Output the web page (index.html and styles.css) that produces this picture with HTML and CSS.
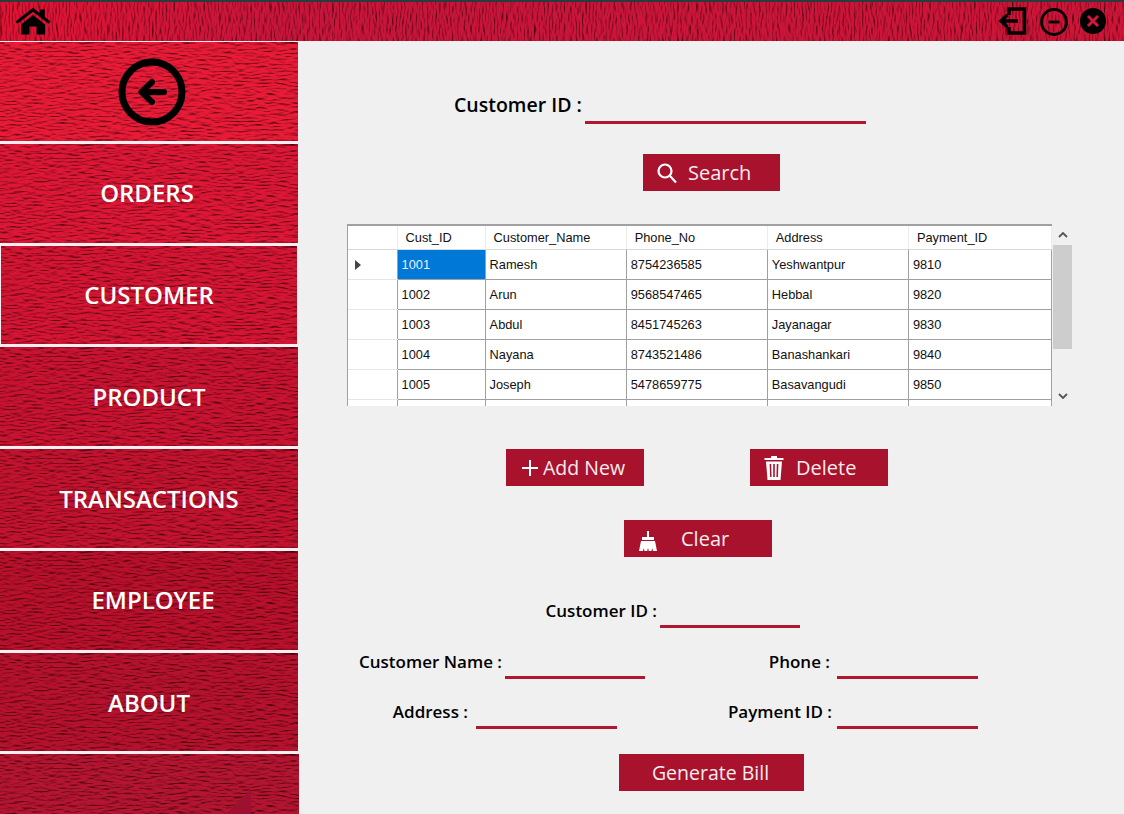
FILE: index.html
```html
<!DOCTYPE html>
<html lang="en">
<head>
<meta charset="utf-8">
<title>Customer</title>
<link rel="stylesheet" href="styles.css">
</head>
<body>
<svg class="defs" width="0" height="0" aria-hidden="true">
  <defs>
    <linearGradient id="topg" x1="0" y1="0" x2="1" y2="0">
      <stop offset="0" stop-color="#e01232"/>
      <stop offset="0.25" stop-color="#c8143a"/>
      <stop offset="1" stop-color="#cc1436"/>
    </linearGradient>
    <filter id="woodH" x="0" y="0" width="100%" height="100%" color-interpolation-filters="sRGB">
      <feTurbulence type="fractalNoise" baseFrequency="0.09 0.6" numOctaves="4" seed="7" result="n"/>
      <feDiffuseLighting in="n" surfaceScale="1.6" diffuseConstant="1.1" lighting-color="#ffffff" result="l">
        <feDistantLight azimuth="90" elevation="60"/>
      </feDiffuseLighting>
      <feComposite in="SourceGraphic" in2="l" operator="arithmetic" k1="0.95" k2="0.05" k3="0.03" k4="-0.025"/>
    </filter>
    <filter id="woodV" x="0" y="0" width="100%" height="100%" color-interpolation-filters="sRGB">
      <feTurbulence type="fractalNoise" baseFrequency="0.6 0.09" numOctaves="4" seed="11" result="n"/>
      <feDiffuseLighting in="n" surfaceScale="1.5" diffuseConstant="1.1" lighting-color="#ffffff" result="l">
        <feDistantLight azimuth="0" elevation="60"/>
      </feDiffuseLighting>
      <feComposite in="SourceGraphic" in2="l" operator="arithmetic" k1="0.95" k2="0.05" k3="0.03" k4="-0.025"/>
    </filter>
  </defs>
</svg>
<div class="app">
  <header class="topbar">
    <svg class="tex" aria-hidden="true"><rect class="fill-top" width="100%" height="100%"/></svg>
    <svg class="ico-home" viewBox="0 0 36 28" aria-hidden="true">
      <path d="M0.500 14.500 18 0.800l7 5.500V2.500h4.800v7.500l5.700 4.500-1.800 2.300L18 4.800 2.300 16.800z"/>
      <path d="M6 17.500 18 8l12 9.500v10H21.500v-8h-7v8H6z"/>
    </svg>
    <div class="win-icons">
      <svg class="ico-exit" viewBox="0 0 30 30" aria-hidden="true">
        <path class="ln" d="M12 9V3h15.500v24H12v-6"/>
        <path class="ln" d="M5 15h16M10.500 9 4 15l6.500 6"/>
      </svg>
      <svg class="ico-min" viewBox="0 0 30 30" aria-hidden="true">
        <circle class="ln3" cx="15" cy="15" r="12.500"/>
        <path class="ln3" d="M9.500 15h11"/>
      </svg>
      <svg class="ico-close" viewBox="0 0 28 28" aria-hidden="true">
        <circle cx="14" cy="14" r="13"/>
        <path class="x" d="M9 9l10 10M19 9 9 19"/>
      </svg>
    </div>
  </header>
  <div class="body">
    <nav class="sidebar">
      <a class="nav-item c1">
        <svg class="tex" aria-hidden="true"><rect width="100%" height="100%"/></svg>
        <svg class="ico-back" viewBox="0 0 68 68" aria-hidden="true">
          <circle cx="34" cy="34" r="30"/>
          <path d="M46 34H24M34 24 23.500 34 34 44"/>
        </svg>
      </a>
      <a class="nav-item c2 left up"><svg class="tex" aria-hidden="true"><rect width="100%" height="100%"/></svg><span>ORDERS</span></a>
      <a class="nav-item c3 framed up"><svg class="tex" aria-hidden="true"><rect width="100%" height="100%"/></svg><span>CUSTOMER</span></a>
      <a class="nav-item c4"><svg class="tex" aria-hidden="true"><rect width="100%" height="100%"/></svg><span>PRODUCT</span></a>
      <a class="nav-item c5"><svg class="tex" aria-hidden="true"><rect width="100%" height="100%"/></svg><span>TRANSACTIONS</span></a>
      <a class="nav-item c6 right up"><svg class="tex" aria-hidden="true"><rect width="100%" height="100%"/></svg><span>EMPLOYEE</span></a>
      <a class="nav-item c7"><svg class="tex" aria-hidden="true"><rect width="100%" height="100%"/></svg><span>ABOUT</span></a>
      <div class="nav-item c8 last">
        <svg class="tex" aria-hidden="true"><rect width="100%" height="100%"/></svg>
        <svg class="corner" viewBox="0 0 26 26" aria-hidden="true"><path d="M0 26 26 0v26z"/></svg>
      </div>
    </nav>
    <main class="main">
      <div class="search-row">
        <label class="lbl big l-search">Customer ID :</label>
        <input class="field f-search" type="text">
      </div>
      <div class="center-row r-search">
        <button class="btn b-search">
          <svg class="btn-ico i-search" viewBox="0 0 22 22" aria-hidden="true"><circle cx="9" cy="9" r="6.500"/><path d="M14 14l6 6.500"/></svg>
          <span>Search</span>
        </button>
      </div>
      <div class="grid-wrap">
        <div class="grid-clip">
          <table class="grid">
            <colgroup><col class="c-h"><col class="c-id"><col class="c-w"><col class="c-w"><col class="c-w"><col class="c-p"></colgroup>
            <thead>
              <tr><th></th><th>Cust_ID</th><th>Customer_Name</th><th>Phone_No</th><th>Address</th><th>Payment_ID</th></tr>
            </thead>
            <tbody>
              <tr><th class="rh"><i class="arrow"></i></th><td class="sel">1001</td><td>Ramesh</td><td>8754236585</td><td>Yeshwantpur</td><td>9810</td></tr>
              <tr><th class="rh"></th><td>1002</td><td>Arun</td><td>9568547465</td><td>Hebbal</td><td>9820</td></tr>
              <tr><th class="rh"></th><td>1003</td><td>Abdul</td><td>8451745263</td><td>Jayanagar</td><td>9830</td></tr>
              <tr><th class="rh"></th><td>1004</td><td>Nayana</td><td>8743521486</td><td>Banashankari</td><td>9840</td></tr>
              <tr><th class="rh"></th><td>1005</td><td>Joseph</td><td>5478659775</td><td>Basavangudi</td><td>9850</td></tr>
              <tr><th class="rh"></th><td></td><td></td><td></td><td></td><td></td></tr>
            </tbody>
          </table>
        </div>
        <div class="scrollbar">
          <svg class="chev" viewBox="0 0 10 6" aria-hidden="true"><path d="M1 5l4-4 4 4"/></svg>
          <div class="thumb"></div>
          <svg class="chev chev-d" viewBox="0 0 10 6" aria-hidden="true"><path d="M1 1l4 4 4-4"/></svg>
        </div>
      </div>
      <div class="actions">
        <button class="btn b-add">
          <svg class="btn-ico i-plus" viewBox="0 0 16 16" aria-hidden="true"><path d="M8 0v16M0 8h16"/></svg>
          <span>Add New</span>
        </button>
        <button class="btn b-del">
          <svg class="btn-ico i-trash" viewBox="0 0 20 24" aria-hidden="true">
            <path class="solid" d="M7 0h6v2h6.500v2H.5V2H7z"/>
            <path class="solid" d="M2 5.500h16L16.500 24h-13zM5.600 8l.5 13h1.500L7.200 8zM9.200 8v13h1.600V8zM12.800 8l-.4 13h1.500l.5-13z"/>
          </svg>
          <span>Delete</span>
        </button>
      </div>
      <div class="clear-row">
        <button class="btn b-clear">
          <svg class="btn-ico i-broom" viewBox="0 0 18 20" aria-hidden="true">
            <path class="solid" d="M8 0h2v6h5v3H3V6h5z"/>
            <path class="solid" d="M2 10h14l2 10h-4l-.8-3-.7 3H9.800L9 17l-.8 3H5.500l-.7-3-.8 3H0z"/>
          </svg>
          <span>Clear</span>
        </button>
      </div>
      <div class="form-row r-a">
        <label class="lbl w358">Customer ID :</label><input class="field f140 g3" type="text">
      </div>
      <div class="form-row r-b">
        <label class="lbl w203">Customer Name :</label><input class="field f140 g3" type="text">
        <label class="lbl w185">Phone :</label><input class="field f141 g7" type="text">
      </div>
      <div class="form-row r-c">
        <label class="lbl w169">Address :</label><input class="field f141 g8" type="text">
        <label class="lbl w215">Payment ID :</label><input class="field f141 g5" type="text">
      </div>
      <div class="center-row r-gen">
        <button class="btn b-gen"><span>Generate Bill</span></button>
      </div>
    </main>
  </div>
</div>
</body>
</html>
```
FILE: styles.css
```css
* { box-sizing: border-box; }
html, body { margin: 0; height: 100%; }
body { width: 1124px; height: 814px; overflow: hidden; background: #f0f0f0; font-family: "Open Sans", "Noto Sans", sans-serif; }
.defs { position: absolute; }
.app { display: flex; flex-direction: column; height: 814px; }

.topbar { position: relative; flex: 0 0 41px; display: flex; justify-content: space-between; align-items: center; border-top: 2px solid #2b3a3c; padding: 0 17px 0 15px; }
.tex { position: absolute; left: 0; top: 0; width: 100%; height: 100%; display: block; }
.fill-top { fill: url(#topg); filter: url(#woodV); }
.ico-home { position: relative; width: 36px; height: 28px; fill: #000; margin-top: -2px; }
.win-icons { position: relative; display: flex; align-items: center; gap: 11px; margin-top: -1px; }
.ico-exit { width: 30px; height: 30px; margin-right: 1px; }
.ln { fill: none; stroke: #000; stroke-width: 3.500; }
.ln3 { fill: none; stroke: #000; stroke-width: 2.800; }
.ico-min { width: 30px; height: 30px; margin-top: 2px; }
.ico-close { width: 28px; height: 28px; margin-left: -1px; fill: #000; }
.x { stroke: #d01838; stroke-width: 3; fill: none; }

.body { flex: 1; display: flex; min-height: 0; }
.sidebar { flex: 0 0 298px; margin-right: 1px; background: #fbeef0; padding-top: 1px; display: grid; grid-template-rows: 99px 99px 98px 99px 99px 99px 98px 61px; row-gap: 3px; }
.nav-item { position: relative; display: flex; align-items: center; justify-content: center; color: #fff; font-size: 24px; font-weight: 600; text-decoration: none; overflow: hidden; }
.nav-item span { position: relative; }
.nav-item rect { filter: url(#woodH); }
.c1 rect { fill: #e81a36; }
.c2 rect { fill: #dc1634; }
.c3 rect { fill: #d41432; }
.c4 rect { fill: #c81230; }
.c5 rect { fill: #c2122e; }
.c6 rect { fill: #b80f2a; }
.c7 rect { fill: #b6112c; }
.c8 rect { fill: #b4142f; }
.left span { left: -2px; }
.right span { left: 4px; }
.up span { top: -1px; }
.framed { margin: 0 1px; }
.last { margin-right: -1px; }
.ico-back { position: relative; width: 68px; height: 68px; margin-left: 5px; }
.ico-back circle { fill: none; stroke: #000; stroke-width: 7; }
.ico-back path { fill: none; stroke: #000; stroke-width: 6; stroke-linecap: round; stroke-linejoin: round; }
.corner { position: absolute; left: 225px; bottom: 0; width: 26px; height: 26px; fill: #9e1030; }

.main { flex: 1; min-width: 0; }
.lbl { display: block; flex: none; text-align: right; white-space: nowrap; color: #000; font-weight: 600; font-size: 17px; line-height: 24px; }
.big { font-size: 19.500px; line-height: 28px; }
.field { display: block; flex: none; height: 24px; padding: 0; background: transparent; border: 0; border-bottom: 3px solid #b0182f; outline: 0; }
.search-row { display: flex; margin-top: 50px; height: 34px; padding-left: 155px; }
.l-search { width: 127px; }
.f-search { width: 281px; margin-left: 4px; height: 33px; }

.center-row { display: flex; }
.r-search { margin-top: 29px; padding-left: 344px; }
.btn { display: flex; align-items: center; height: 37px; border: 0; background: #a8122c; color: #f7ecee; font: 400 20px/1 "Open Sans", "Noto Sans", sans-serif; padding: 0; }
.btn-ico { flex: none; display: block; }
.btn-ico path, .btn-ico circle { fill: none; stroke: #fff; }
.btn-ico .solid { fill: #fff; stroke: none; fill-rule: evenodd; }
.b-search { width: 137px; padding-left: 13px; }
.i-search { width: 22px; height: 22px; margin-right: 10px; }
.i-search circle, .i-search path { stroke-width: 2.200; }

.grid-wrap { display: flex; margin: 33px 0 0 48px; height: 182px; }
.grid-clip { width: 705px; height: 182px; overflow: hidden; background: #fff; border-top: 2px solid #a0a0a0; border-left: 1px solid #a0a0a0; }
.grid { table-layout: fixed; width: 704px; border-collapse: collapse; font: 400 12.800px/1 "Liberation Sans", Arial, sans-serif; color: #111; }
.c-h { width: 49px; }
.c-id { width: 88px; }
.c-w { width: 141px; }
.c-p { width: 143px; }
.grid thead th { height: 23px; font-weight: 400; text-align: left; padding: 2px 0 0 8px; border-right: 1px solid #ececec; border-bottom: 1px solid #d8d8d8; }
.grid td { height: 30px; padding: 2px 0 0 4px; border: 1px solid #a0a0a0; border-left: 0; }
.grid .rh { position: relative; height: 30px; border-bottom: 1px solid #e6e6e6; border-right: 1px solid #a0a0a0; padding: 0; }
.grid .sel { background: #0078d7; color: #e8f2fb; }
.arrow { position: absolute; left: 7px; top: 10px; width: 0; height: 0; border-left: 6px solid #444; border-top: 5.500px solid transparent; border-bottom: 5.500px solid transparent; }
.scrollbar { position: relative; width: 20px; }
.thumb { position: absolute; left: 1px; top: 21px; width: 19px; height: 104px; background: #cdcdcd; }
.chev { position: absolute; left: 6px; top: 8px; width: 10px; height: 6px; }
.chev-d { top: 169px; }
.chev path { fill: none; stroke: #555; stroke-width: 1.800; }

.actions { display: flex; margin-top: 43px; padding-left: 207px; gap: 106px; }
.b-add { width: 138px; padding-left: 16px; font-size: 19.500px; }
.i-plus { width: 16px; height: 16px; margin-right: 5px; }
.i-plus path { stroke-width: 2; }
.b-del { width: 138px; padding-left: 14px; }
.i-trash { width: 20px; height: 24px; margin-right: 12px; }
.clear-row { display: flex; margin-top: 34px; padding-left: 325px; }
.b-clear { width: 148px; padding-left: 15px; }
.i-broom { width: 18px; height: 20px; margin-right: 24px; margin-top: 4px; }

.form-row { display: flex; height: 30px; align-items: flex-start; }
.r-a { margin-top: 42px; }
.r-b { margin-top: 21px; }
.r-c { margin-top: 20px; }
.form-row .field { height: 29px; }
.f140 { width: 140px; }
.f141 { width: 141px; }
.g3 { margin-left: 3px; }
.g5 { margin-left: 5px; }
.g7 { margin-left: 7px; }
.g8 { margin-left: 8px; }
.w358 { width: 358px; }
.w203 { width: 203px; }
.w185 { width: 185px; }
.w169 { width: 169px; }
.w215 { width: 215px; }
.r-gen { margin-top: 24px; padding-left: 320px; }
.b-gen { width: 185px; justify-content: center; padding-right: 2px; font-size: 19.500px; }
```
